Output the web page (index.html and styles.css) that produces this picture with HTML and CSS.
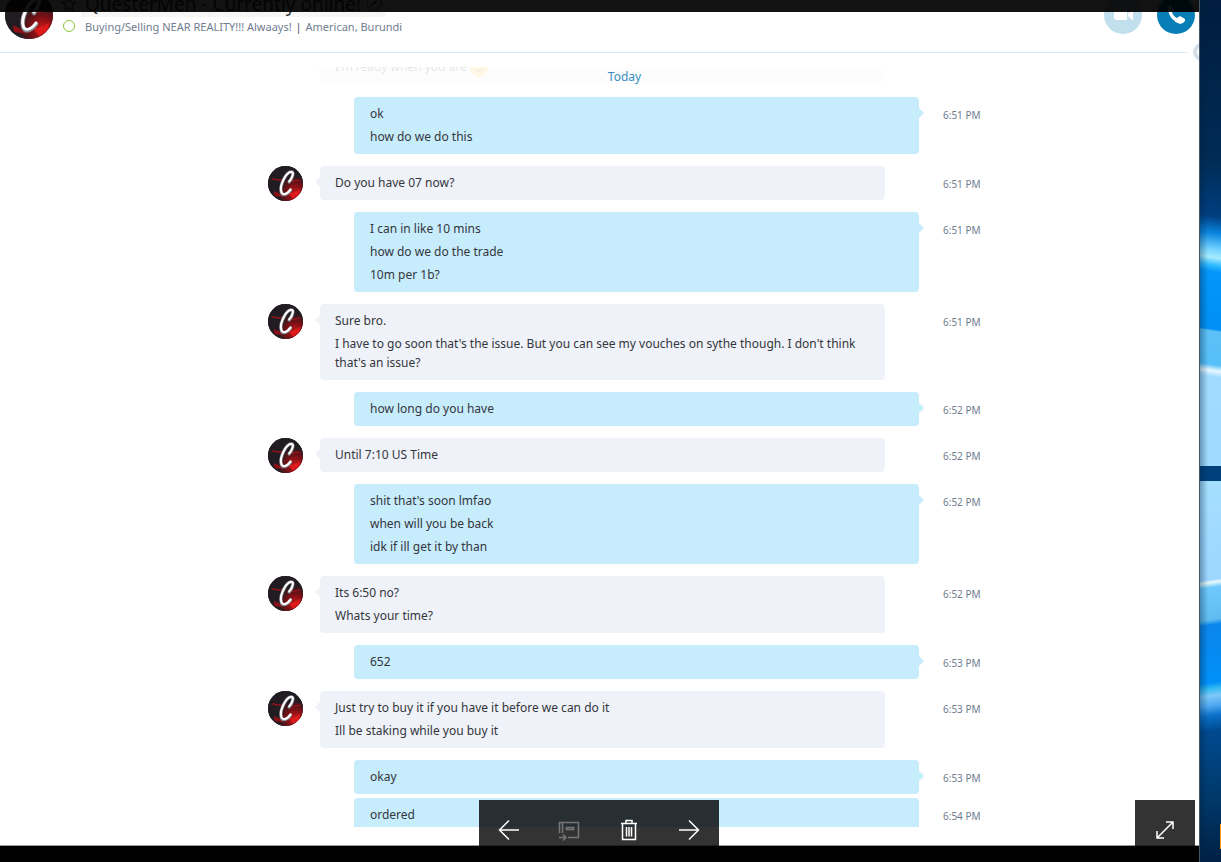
FILE: index.html
```
<!DOCTYPE html>
<html lang="en">
<head>
    <meta charset="UTF-8">
    <meta name="viewport" content="width=device-width, initial-scale=1.0">
    <title>QuesterMen - Chat</title>
    <link rel="stylesheet" href="styles.css">
</head>
<body>
    <!-- shared avatar and icons -->
    <svg class="defs" aria-hidden="true">
        <defs>
            <radialGradient id="glow" cx="0.78" cy="0.78" r="0.5">
                <stop offset="0" stop-color="#c81818"/>
                <stop offset="0.5" stop-color="#7c1015"/>
                <stop offset="1" stop-color="#201c22"/>
            </radialGradient>
            <clipPath id="round"><circle cx="24" cy="24" r="24"/></clipPath>
            <symbol id="avatar" viewBox="0 0 48 48">
                <g clip-path="url(#round)">
                    <rect width="48" height="48" fill="#201c22"/>
                    <rect width="48" height="48" fill="url(#glow)"/>
                    <path d="M5 19l3-2 2 2h9M28 20l7 1 9-2" stroke="#a81218" stroke-width="1.5" fill="none"/>
                    <path d="M8 34l8 4 5 5-12-2z" fill="#8c1015"/>
                    <path d="M29 38l10-3 5-4-1 8-9 6z" fill="#ef1c1c" opacity="0.7"/>
                    <path d="M29 22c5-6 7-14 3-14-7 0-16 18-14 27 1 7 8 5 13-2" stroke="#8b8b91" stroke-width="4.5" fill="none" stroke-linecap="round"/>
                    <path d="M29 21c5-6 7-13 3-13-7 0-16 18-14 26 1 7 8 5 13-2" stroke="#fff" stroke-width="2.8" fill="none" stroke-linecap="round"/>
                </g>
            </symbol>
        </defs>
    </svg>

    <div class="desktop">
        <div class="viewer">
            <div class="photo">
                <header class="contact">
                    <svg class="contact-avatar"><use href="#avatar"/></svg>
                    <div class="contact-info">
                        <div class="title-row">
                            <svg class="star" viewBox="0 0 16 16"><path d="M8 1.500l2 4.300 4.600.5-3.400 3.200.9 4.700L8 11.900l-4.100 2.300.9-4.700L1.400 6.300 6 5.800z" fill="none" stroke="#444" stroke-width="1.300"/></svg>
                            <h1>QuesterMen - Currently online! <svg class="compass" viewBox="0 0 16 16"><circle cx="8" cy="8" r="7" fill="none" stroke="#2a5068"/><path d="M12 4L9 9l-5 3 3-5z" fill="#2a5068"/></svg></h1>
                        </div>
                        <div class="mood-row">
                            <span class="status"></span>
                            <p>Buying/Selling NEAR REALITY!!! Alwaays! <span class="bar">|</span> American, Burundi</p>
                        </div>
                    </div>
                    <div class="calls">
                        <button class="call video" aria-label="Video call"><svg viewBox="0 0 38 38"><path d="M10 12h10q3 0 3 3v9H13q-3 0-3-3zM24 18l4-4h1v10h-1l-4-4z" fill="#fff"/></svg></button>
                        <button class="call" aria-label="Call"><svg viewBox="0 0 38 38"><path d="M14 9q-3 1-3 4 1 11 12 15 3 0 5-3v-2l-5-3-3 2q-4-2-5-6l2-2z" fill="#fff"/></svg></button>
                    </div>
                </header>
                <div class="rule"><span class="knob"></span></div>

                <main class="scroll">
                    <div class="date">Today</div>
                    <div class="thread">
                        <div class="row in faded">
                            <div class="bubble"><p>I'm ready when you are <svg class="smile" viewBox="0 0 18 18"><circle cx="9" cy="9" r="9" fill="#ffc83c"/><path d="M5 10q4 4 8 0" stroke="#704000" fill="none"/></svg></p></div>
                        </div>
                        <div class="row out">
                            <div class="bubble"><p>ok</p><p>how do we do this</p></div>
                            <time>6:51 PM</time>
                        </div>
                        <div class="row in">
                            <svg class="avatar"><use href="#avatar"/></svg>
                            <div class="bubble"><p>Do you have 07 now?</p></div>
                            <time>6:51 PM</time>
                        </div>
                        <div class="row out">
                            <div class="bubble"><p>I can in like 10 mins</p><p>how do we do the trade</p><p>10m per 1b?</p></div>
                            <time>6:51 PM</time>
                        </div>
                        <div class="row in">
                            <svg class="avatar"><use href="#avatar"/></svg>
                            <div class="bubble"><p>Sure bro.</p><p>I have to go soon that's the issue. But you can see my vouches on sythe though. I don't think that's an issue?</p></div>
                            <time>6:51 PM</time>
                        </div>
                        <div class="row out">
                            <div class="bubble"><p>how long do you have</p></div>
                            <time>6:52 PM</time>
                        </div>
                        <div class="row in">
                            <svg class="avatar"><use href="#avatar"/></svg>
                            <div class="bubble"><p>Until 7:10 US Time</p></div>
                            <time>6:52 PM</time>
                        </div>
                        <div class="row out">
                            <div class="bubble"><p>shit that's soon lmfao</p><p>when will you be back</p><p>idk if ill get it by than</p></div>
                            <time>6:52 PM</time>
                        </div>
                        <div class="row in">
                            <svg class="avatar"><use href="#avatar"/></svg>
                            <div class="bubble"><p>Its 6:50 no?</p><p>Whats your time?</p></div>
                            <time>6:52 PM</time>
                        </div>
                        <div class="row out">
                            <div class="bubble"><p>652</p></div>
                            <time>6:53 PM</time>
                        </div>
                        <div class="row in">
                            <svg class="avatar"><use href="#avatar"/></svg>
                            <div class="bubble"><p>Just try to buy it if you have it before we can do it</p><p>Ill be staking while you buy it</p></div>
                            <time>6:53 PM</time>
                        </div>
                        <div class="row out">
                            <div class="bubble"><p>okay</p></div>
                            <time>6:53 PM</time>
                        </div>
                        <div class="row out joined">
                            <div class="bubble"><p>ordered</p></div>
                            <time>6:54 PM</time>
                        </div>
                    </div>
                </main>
            </div>

            <div class="top-shade"></div>
            <div class="toolbar">
                <button aria-label="Previous"><svg viewBox="0 0 22 22"><path d="M21 11H1.500M11 1.500L1.500 11l9.500 9.500"/></svg></button>
                <button class="off" aria-label="Add to album" disabled><svg viewBox="0 0 22 22"><path d="M1.500 14V3.500h19v15H10M4.500 4v10M8.500 8.500h7v2h-7zM1 18.500h7M5 15.500l3 3-3 3"/></svg></button>
                <button aria-label="Delete"><svg viewBox="0 0 22 22"><path d="M3 4.500h16M8 4V1.500h6V4M4.500 5v15.500h13V5M8.500 8v9.500M11 8v9.500M13.500 8v9.500"/></svg></button>
                <button aria-label="Next"><svg viewBox="0 0 22 22"><path d="M1 11h19.500M11 1.500l9.500 9.500-9.500 9.500"/></svg></button>
            </div>
            <div class="toolbar corner">
                <button aria-label="Full screen"><svg viewBox="0 0 22 22"><path d="M3 19L19 3M12 3h7v7M3 12v7h7"/></svg></button>
            </div>
        </div>
        <div class="wallpaper"><span class="tile"></span></div>
    </div>
</body>
</html>
```
FILE: styles.css
```
* {
    margin: 0;
    padding: 0;
    box-sizing: border-box;
}

body {
    font-family: 'Noto Sans', 'Open Sans', sans-serif;
    font-size: 12px;
    color: #33363c;
    background: #000;
}

button {
    border: none;
    cursor: pointer;
}

.defs {
    position: absolute;
    width: 0;
    height: 0;
}

.desktop {
    display: flex;
    height: 100vh;
    overflow: hidden;
}

.viewer {
    position: relative;
    flex: 1;
    min-width: 0;
    padding-bottom: 16px;
    background: #000;
}

.photo {
    display: flex;
    flex-direction: column;
    height: 100%;
    padding-bottom: 18px;
    background: #fff;
    border-bottom: 1px solid #999;
    overflow: hidden;
}

/* contact header */
.contact {
    display: flex;
    flex: none;
    height: 61px;
    margin-top: -9px;
    padding: 0 4px 0 5px;
}

.contact-avatar {
    width: 48px;
    height: 48px;
}

.contact-info {
    flex: 1;
    padding-left: 8px;
}

.title-row, .mood-row {
    display: flex;
    align-items: center;
}

.title-row {
    height: 26px;
}

.star {
    width: 16px;
    height: 16px;
    margin-right: 4px;
}

h1 {
    padding: 0 4px;
    font-size: 19px;
    font-weight: 400;
    line-height: 26px;
    background: #f6f6f6;
}

.compass {
    width: 16px;
    height: 16px;
}

.mood-row {
    gap: 10px;
    height: 18px;
    padding-left: 2px;
    font-size: 11px;
    color: #6f7c8f;
}

.status {
    width: 12px;
    height: 12px;
    border: 1px solid #8cc63e;
    border-radius: 50%;
}

.bar {
    margin: 0 1px;
    color: #4c5868;
}

.calls {
    display: flex;
    gap: 15px;
    padding-top: 5px;
}

.call {
    width: 38px;
    height: 38px;
    border-radius: 50%;
    background: #087eb6;
}

.call svg {
    display: block;
}

.call.video {
    background: #c1dfec;
}

.rule {
    position: relative;
    flex: none;
    height: 1px;
    margin-right: 11px;
    background: #dae9f4;
}

.knob {
    position: absolute;
    right: -23px;
    top: -9px;
    width: 18px;
    height: 18px;
    border: 4px solid #d3dfe8;
    border-radius: 50%;
}

/* messages */
.scroll {
    position: relative;
    flex: 1;
    min-height: 0;
    margin-top: 14px;
    padding-left: 50px;
    overflow: hidden;
}

.date {
    position: absolute;
    left: 50px;
    right: 0;
    top: 0;
    line-height: 19px;
    text-align: center;
    color: #1683b8;
}

.thread {
    width: 713px;
    max-width: 100%;
    margin: -17px auto 0;
}

.row {
    display: flex;
    align-items: flex-start;
    margin-bottom: 12px;
}

.avatar {
    flex: none;
    width: 35px;
    height: 35px;
    margin: 0 -35px -1px 0;
}

.bubble {
    position: relative;
    flex: 1;
    padding: 7px 15px 8px;
    border-radius: 4px;
    line-height: 19px;
}

.bubble p + p {
    margin-top: 4px;
}

.in .bubble {
    margin: 0 96px 0 52px;
    background: #eff2f8;
}

.out .bubble {
    margin: 0 62px 0 86px;
    padding-left: 16px;
    background: #c7ecfc;
}

.bubble::after {
    content: '';
    position: absolute;
    top: 11px;
    border: 5px solid transparent;
}

.in .bubble::after {
    right: 100%;
    border-left-width: 0;
    border-right-color: #eff2f8;
}

.out .bubble::after {
    left: 100%;
    border-right-width: 0;
    border-left-color: #c7ecfc;
}

.row time {
    flex: none;
    width: 38px;
    margin-left: -38px;
    padding-top: 9px;
    font-size: 10px;
    line-height: 18px;
    white-space: nowrap;
    color: #6f7c8f;
}

.row:has(+ .joined) {
    margin-bottom: 4px;
}

.joined .bubble::after {
    display: none;
}

.faded {
    opacity: 0.12;
}

.smile {
    width: 18px;
    height: 18px;
    vertical-align: middle;
}

/* viewer controls */
.top-shade {
    position: absolute;
    left: 0;
    right: 0;
    top: 0;
    height: 12px;
    background: rgba(0, 0, 0, 0.93);
}

.toolbar {
    position: absolute;
    left: 50%;
    bottom: 16px;
    display: flex;
    height: 46px;
    margin-left: -121px;
    background: rgba(0, 0, 0, 0.8);
}

.toolbar.corner {
    left: auto;
    right: 4px;
}

.toolbar button {
    display: flex;
    justify-content: center;
    width: 60px;
    padding-top: 19px;
    background: none;
}

.toolbar svg {
    width: 22px;
    height: 22px;
    fill: none;
    stroke: #fff;
    stroke-width: 1.5;
}

.toolbar .off svg {
    stroke: #777;
}

/* window pane light: upper half, lower half, dark crossbar behind */
.wallpaper {
    position: relative;
    width: 22px;
    border-left: 1px solid #456;
    background:
        linear-gradient(90deg, rgba(0, 30, 60, 0.35), transparent 8px),
        linear-gradient(188deg, #001c3e 0, #002b55 160px, #003f80 215px, #0a86e0 232px, #6fd0ff 247px, #a5ecff 256px, #2cb8ff 264px, #0496fa 270px, #0090f5 327px, #5cc0f5 329px, #55c0f8 362px, #e8f8ff 368px, #a0dcff 374px, #a0daff 465px) top / 100% 466px no-repeat,
        linear-gradient(172deg, #a5dfff 0, #9dd6ff 99px, #e8f8f8 102px, #6ec8fb 107px, #60bcf0 139px, #0a86ec 144px, #0090f8 201px, #30b8f0 207px, #7cc8f8 214px, #50a8f0 224px, #0a70c8 234px, #004a90 249px, #003868 319px, #001f44 381px) bottom / 100% calc(100% - 481px) no-repeat,
        #00407c;
}

.tile {
    position: absolute;
    right: 0;
    bottom: 13px;
    width: 1px;
    height: 25px;
    background: #ff9c10;
}
```
